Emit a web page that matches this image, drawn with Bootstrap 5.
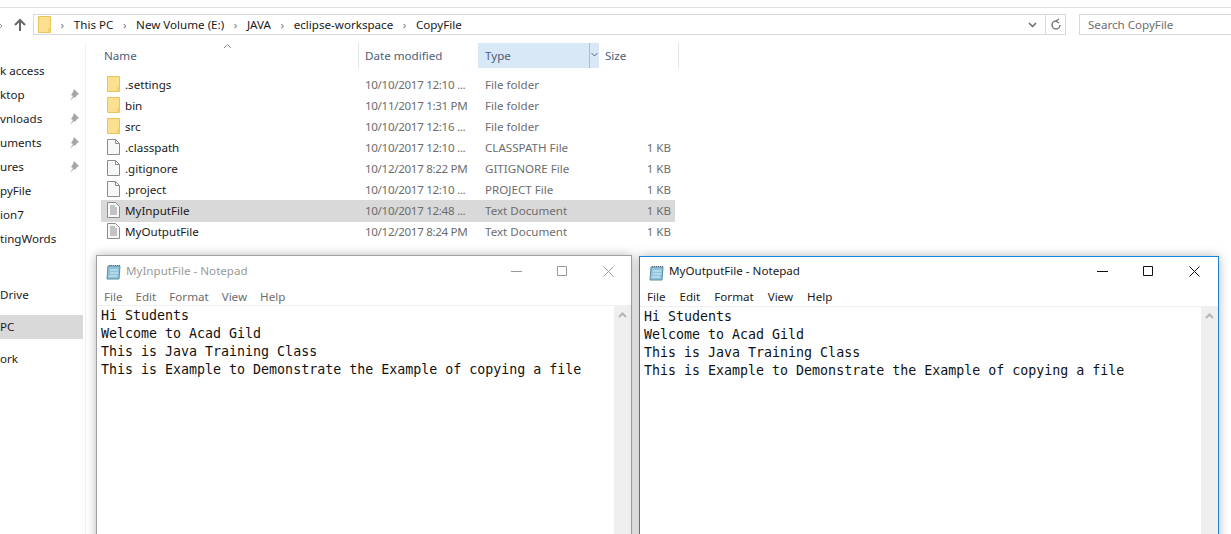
<!DOCTYPE html>
<html lang="en">
<head>
<meta charset="UTF-8">
<title>CopyFile</title>
<link href="https://cdn.jsdelivr.net/npm/bootstrap@5.3.0/dist/css/bootstrap.min.css" rel="stylesheet">
<style>
html, body { height: 534px; overflow: hidden; }
body { font-family: "Noto Sans", "Open Sans", sans-serif; font-size: 11.6px; color: #1a1a1a; background: #fff; position: relative; }
.top-rule { height: 8px; border-bottom: 1px solid #e3e3e3; }
.addr-row { height: 21px; margin-top: 6px; padding-left: 33px; margin-bottom: 8px; }
.nav-arrow { width: 33px; margin-left: -33px; flex: none; padding-right: 6px; }
.addr-box { width: 1033px; border: 1px solid #d9d9d9; height: 21px; }
.crumb-sep { margin: 0 9.6px; color: #777; }
.crumb { line-height: 19px; white-space: nowrap; }
.addr-tools { width: 20px; border-left: 1px solid #d9d9d9; height: 100%; }
.search-box { width: 152px; height: 21px; margin-left: 13px; border: 1px solid #d9d9d9; border-right: 0; padding-left: 8px; line-height: 19px; color: #6d6d6d; }
.side-pane { width: 86px; height: 491px; border-right: 1px solid #f0f0f0; padding-top: 16px; flex: none; overflow: hidden; }
.side-item { height: 24px; width: 83px; line-height: 24px; white-space: nowrap; position: relative; }
.side-item.active-item { background: #d9d9d9; }
.side-gap { height: 32px; }
.side-gap-small { height: 8px; }
.side-item svg { position: absolute; left: 68px; top: 6px; }
.head-row { height: 25px; color: #4c607a; }
.head-cell { height: 25px; line-height: 25px; border-right: 1px solid #e5e5e5; flex: none; }
.head-name { width: 273px; padding-left: 18px; position: relative; }
.head-name svg { position: absolute; left: 137px; top: 0; }
.head-date { width: 119px; padding-left: 6px; border-right: 0; }
.head-type { width: 121px; background: #d9e8f7; border-right: 0; padding-left: 7px; display: flex; }
.head-type span { width: 105px; border-right: 1px solid #a9bdd0; }
.head-type i { flex: 1; text-align: center; line-height: 22px; }
.head-size { width: 80px; padding-left: 6px; }
.file-list { padding-top: 6px; }
.file-row { width: 574px; height: 21px; line-height: 21px; margin-left: 15px; display: flex; white-space: nowrap; color: #6d6d6d; }
.file-row.picked { background: #d9d9d9; height: 22px; margin-bottom: -1px; }
.file-ico { width: 24px; padding-left: 6px; flex: none; }
.file-ico svg { display: block; margin-top: 2px; }
.file-name { width: 240px; color: #1a1a1a; }
.file-date { width: 120px; letter-spacing: -.32px; }
.file-type { width: 130px; }
.file-size { width: 56px; text-align: right; }
.note-win { position: absolute; top: 255px; height: 290px; background: #fff; border: 1px solid #a0a0a0; box-shadow: 0 0 10px rgba(0,0,0,.28); }
.win-one { left: 96px; width: 536px; }
.win-two { left: 639px; top: 256px; width: 580px; border-color: #1883d7; }
.note-title { height: 30px; padding-left: 9px; color: #9a9a9a; line-height: 29px; }
.win-two .note-title { color: #1a1a1a; height: 29px; line-height: 27px; }
.note-title svg { margin-right: 4px; flex: none; }
.win-btns { margin-left: auto; margin-right: -2px; }
.win-two .win-btns { margin-right: -1px; }
.win-btns svg { display: block; }
.win-btn { width: 46px; height: 30px; display: flex; align-items: center; justify-content: center; }
.win-two .win-btn { height: 28px; }
.note-menu { height: 19px; padding-left: 7px; gap: 13px; color: #6d6d6d; line-height: 21px; border-bottom: 1px solid #f0f0f0; box-sizing: content-box; }
.win-two .note-menu { color: #1a1a1a; height: 20px; gap: 14px; }
.note-body { height: 240px; }
.note-text { flex: 1; margin: 0; padding: 1px 0 0 4px; font-family: "DejaVu Sans Mono", monospace; font-size: 13.3px; line-height: 18px; color: #111; overflow: hidden; }
.note-scroll { width: 17px; background: #efefef; text-align: center; }
.note-scroll svg { display: block; margin: 6px auto 0; }
.back-stub { position: absolute; left: 0; top: 24px; }
</style>
</head>
<body>
    <div class="top-rule"></div>
    <svg class="back-stub" width="3" height="4" viewBox="0 0 3 4"><path d="M0 0l2 2-2 2" fill="none" stroke="#999"/></svg>

    <!-- Address bar -->
    <div class="addr-row d-flex">
        <div class="nav-arrow d-flex justify-content-end pt-1">
            <svg width="14" height="14" viewBox="0 0 14 14"><path d="M7 13V2M2 7l5-5 5 5" fill="none" stroke="#666" stroke-width="2"/></svg>
        </div>
        <div class="addr-box d-flex align-items-center">
            <svg class="ms-1" width="13" height="17" viewBox="0 0 13 17"><path d="M.5.5h12v16H.5z" fill="#fbe08f" stroke="#e8c25a"/><path d="M10 12v4.500h2.500V12z" fill="#f5d06a"/></svg>
            <div class="crumb d-flex">
                <span class="crumb-sep">›</span><span>This PC</span>
                <span class="crumb-sep">›</span><span>New Volume (E:)</span>
                <span class="crumb-sep">›</span><span>JAVA</span>
                <span class="crumb-sep">›</span><span>eclipse-workspace</span>
                <span class="crumb-sep">›</span><span>CopyFile</span>
            </div>
            <div class="ms-auto me-2">
                <svg width="9" height="6" viewBox="0 0 9 6" class="d-block"><path d="M1 1l3.500 3.500L8 1" fill="none" stroke="#666" stroke-width="1.500"/></svg>
            </div>
            <div class="addr-tools d-flex align-items-center justify-content-center">
                <svg width="12" height="13" viewBox="0 0 12 13"><path d="M6 3a4 4 0 1 1-4 4M3 1l3 2-3 2" fill="none" stroke="#777" stroke-width="1.500" transform="matrix(-1 0 0 1 12 0)"/></svg>
            </div>
        </div>
        <div class="search-box">Search CopyFile</div>
    </div>

    <div class="d-flex">
        <!-- Nav pane, cut off on the left -->
        <div class="side-pane">
            <div class="side-item">k access</div>
            <div class="side-item">ktop<svg width="11" height="12" viewBox="0 0 11 12"><path d="M6 0l5 5-2 1-2 3-1-1-4 4 3-5-2-1 2-3z" fill="#a5a5a5"/></svg></div>
            <div class="side-item">vnloads<svg width="11" height="12" viewBox="0 0 11 12"><path d="M6 0l5 5-2 1-2 3-1-1-4 4 3-5-2-1 2-3z" fill="#a5a5a5"/></svg></div>
            <div class="side-item">uments<svg width="11" height="12" viewBox="0 0 11 12"><path d="M6 0l5 5-2 1-2 3-1-1-4 4 3-5-2-1 2-3z" fill="#a5a5a5"/></svg></div>
            <div class="side-item">ures<svg width="11" height="12" viewBox="0 0 11 12"><path d="M6 0l5 5-2 1-2 3-1-1-4 4 3-5-2-1 2-3z" fill="#a5a5a5"/></svg></div>
            <div class="side-item">pyFile</div>
            <div class="side-item">ion7</div>
            <div class="side-item">tingWords</div>
            <div class="side-gap"></div>
            <div class="side-item">Drive</div>
            <div class="side-gap-small"></div>
            <div class="side-item active-item">PC</div>
            <div class="side-gap-small"></div>
            <div class="side-item">ork</div>
        </div>

        <!-- File list -->
        <div class="flex-grow-1">
            <div class="head-row d-flex">
                <div class="head-cell head-name">Name
                    <svg width="9" height="6" viewBox="0 0 9 6"><path d="M1 5l3.500-3.500L8 5" fill="none" stroke="#8a8a8a"/></svg>
                </div>
                <div class="head-cell head-date">Date modified</div>
                <div class="head-cell head-type"><span>Type</span>
                    <i><svg width="7" height="5" viewBox="0 0 7 5"><path d="M.5 1l3 3 3-3" fill="none" stroke="#4c607a"/></svg></i>
                </div>
                <div class="head-cell head-size">Size</div>
            </div>
            <div class="file-list" id="fileList"></div>
        </div>
    </div>

    <!-- Notepad windows -->
    <div class="note-win win-one" id="winOne"></div>
    <div class="note-win win-two" id="winTwo"></div>

    <script>
        const folderIco = '<svg width="13" height="16" viewBox="0 0 13 16"><path d="M.5.500h12v15H.5z" fill="#fbe08f" stroke="#e8c25a"/><path d="M10 11v4.500h2.500V11z" fill="#f5d06a"/></svg>';
        const blankIco = '<svg width="13" height="16" viewBox="0 0 13 16"><path d="M.5.500h8l4 4v11H.5z" fill="#f7f8f8" stroke="#8c8c8c"/><path d="M8.500.500v4h4" fill="none" stroke="#8c8c8c"/></svg>';
        const textIco = '<svg width="13" height="16" viewBox="0 0 13 16"><path d="M.5.500h8l4 4v11H.5z" fill="#f7f8f8" stroke="#8c8c8c"/><path d="M3 4h5M3 6h7M3 8h7M3 10h7M3 12h7" stroke="#8c8c8c"/></svg>';
        const files = [
            [folderIco, '.settings', '10/10/2017 12:10 ...', 'File folder', ''],
            [folderIco, 'bin', '10/11/2017 1:31 PM', 'File folder', ''],
            [folderIco, 'src', '10/10/2017 12:16 ...', 'File folder', ''],
            [blankIco, '.classpath', '10/10/2017 12:10 ...', 'CLASSPATH File', '1 KB'],
            [blankIco, '.gitignore', '10/12/2017 8:22 PM', 'GITIGNORE File', '1 KB'],
            [blankIco, '.project', '10/10/2017 12:10 ...', 'PROJECT File', '1 KB'],
            [textIco, 'MyInputFile', '10/10/2017 12:48 ...', 'Text Document', '1 KB'],
            [textIco, 'MyOutputFile', '10/12/2017 8:24 PM', 'Text Document', '1 KB']
        ];
        document.getElementById('fileList').innerHTML = files.map(f => `
            <div class="file-row${f[1] === 'MyInputFile' ? ' picked' : ''}">
                <div class="file-ico">${f[0]}</div>
                <div class="file-name">${f[1]}</div>
                <div class="file-date">${f[2]}</div>
                <div class="file-type">${f[3]}</div>
                <div class="file-size">${f[4]}</div>
            </div>`).join('');

        const noteText = 'Hi Students\nWelcome to Acad Gild\nThis is Java Training Class\nThis is Example to Demonstrate the Example of copying a file';
        function noteWin(id, title, stroke) {
            document.getElementById(id).innerHTML = `
                <div class="note-title d-flex">
                    <svg class="mt-2" width="16" height="16" viewBox="0 0 16 16"><path d="M2 2h12l-1 13H1z" fill="#8fc3dc" stroke="#5d8ba3"/><path d="M3 1.500h11" stroke="#666" stroke-dasharray="1 1"/><path d="M4 6h8M4 9h8M3 12h8" stroke="#d5edf6"/></svg>
                    <span>${title}</span>
                    <div class="win-btns d-flex">
                        <div class="win-btn"><svg width="11" height="1"><path d="M0 .5h11" stroke="${stroke}"/></svg></div>
                        <div class="win-btn"><svg width="10" height="10"><path d="M.5.500h9v9h-9z" fill="none" stroke="${stroke}"/></svg></div>
                        <div class="win-btn"><svg width="11" height="11"><path d="M.5.500l10 10M10.500.500l-10 10" stroke="${stroke}"/></svg></div>
                    </div>
                </div>
                <div class="note-menu d-flex"><span>File</span><span>Edit</span><span>Format</span><span>View</span><span>Help</span></div>
                <div class="note-body d-flex">
                    <pre class="note-text">${noteText}</pre>
                    <div class="note-scroll"><svg width="9" height="6" viewBox="0 0 9 6"><path d="M1 5l3.500-3.500L8 5" fill="none" stroke="#b5b5b5" stroke-width="2"/></svg></div>
                </div>`;
        }
        noteWin('winOne', 'MyInputFile - Notepad', '#999');
        noteWin('winTwo', 'MyOutputFile - Notepad', '#111');
    </script>
    <script src="https://cdn.jsdelivr.net/npm/bootstrap@5.3.0/dist/js/bootstrap.bundle.min.js"></script>
</body>
</html>
